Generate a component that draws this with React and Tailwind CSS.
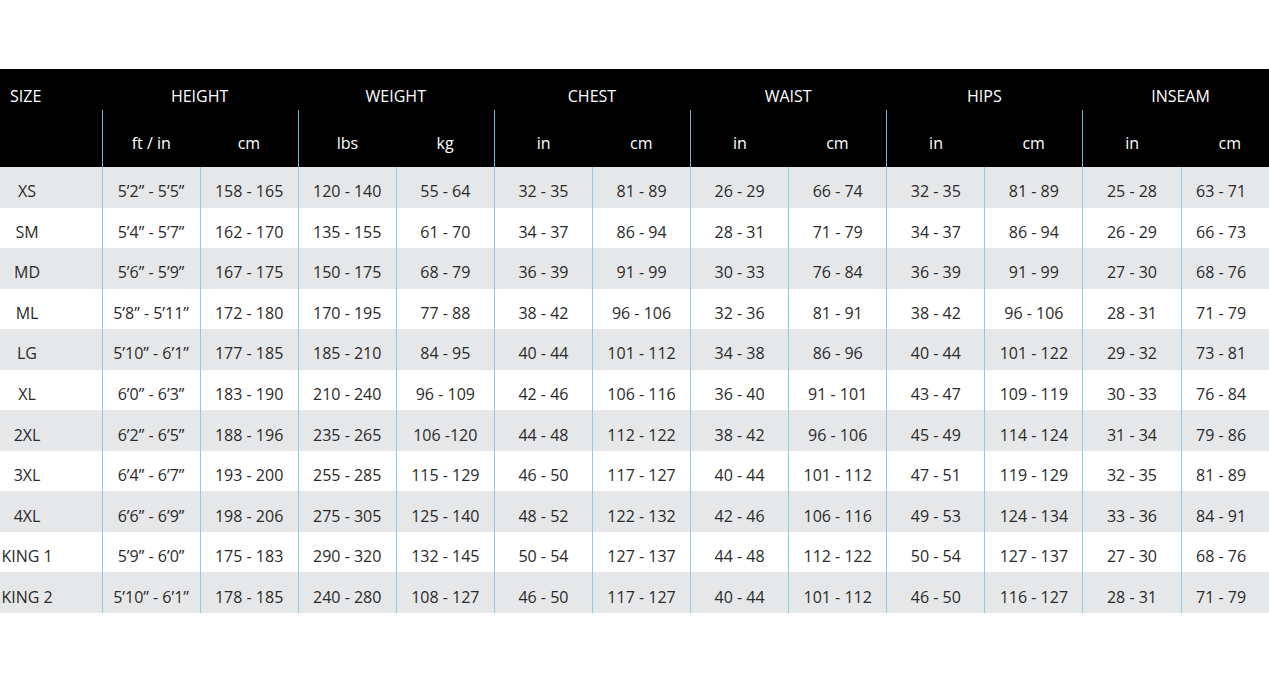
const groups = ["HEIGHT", "WEIGHT", "CHEST", "WAIST", "HIPS", "INSEAM"];
const subs = [
  ["ft / in", "cm"],
  ["lbs", "kg"],
  ["in", "cm"],
  ["in", "cm"],
  ["in", "cm"],
  ["in", "cm"],
];

const rows = [
  ["XS", "5\u20192\u201d - 5\u20195\u201d", "158 - 165", "120 - 140", "55 - 64", "32 - 35", "81 - 89", "26 - 29", "66 - 74", "32 - 35", "81 - 89", "25 - 28", "63 - 71"],
  ["SM", "5\u20194\u201d - 5\u20197\u201d", "162 - 170", "135 - 155", "61 - 70", "34 - 37", "86 - 94", "28 - 31", "71 - 79", "34 - 37", "86 - 94", "26 - 29", "66 - 73"],
  ["MD", "5\u20196\u201d - 5\u20199\u201d", "167 - 175", "150 - 175", "68 - 79", "36 - 39", "91 - 99", "30 - 33", "76 - 84", "36 - 39", "91 - 99", "27 - 30", "68 - 76"],
  ["ML", "5\u20198\u201d - 5\u201911\u201d", "172 - 180", "170 - 195", "77 - 88", "38 - 42", "96 - 106", "32 - 36", "81 - 91", "38 - 42", "96 - 106", "28 - 31", "71 - 79"],
  ["LG", "5\u201910\u201d - 6\u20191\u201d", "177 - 185", "185 - 210", "84 - 95", "40 - 44", "101 - 112", "34 - 38", "86 - 96", "40 - 44", "101 - 122", "29 - 32", "73 - 81"],
  ["XL", "6\u20190\u201d - 6\u20193\u201d", "183 - 190", "210 - 240", "96 - 109", "42 - 46", "106 - 116", "36 - 40", "91 - 101", "43 - 47", "109 - 119", "30 - 33", "76 - 84"],
  ["2XL", "6\u20192\u201d - 6\u20195\u201d", "188 - 196", "235 - 265", "106 -120", "44 - 48", "112 - 122", "38 - 42", "96 - 106", "45 - 49", "114 - 124", "31 - 34", "79 - 86"],
  ["3XL", "6\u20194\u201d - 6\u20197\u201d", "193 - 200", "255 - 285", "115 - 129", "46 - 50", "117 - 127", "40 - 44", "101 - 112", "47 - 51", "119 - 129", "32 - 35", "81 - 89"],
  ["4XL", "6\u20196\u201d - 6\u20199\u201d", "198 - 206", "275 - 305", "125 - 140", "48 - 52", "122 - 132", "42 - 46", "106 - 116", "49 - 53", "124 - 134", "33 - 36", "84 - 91"],
  ["KING 1", "5\u20199\u201d - 6\u20190\u201d", "175 - 183", "290 - 320", "132 - 145", "50 - 54", "127 - 137", "44 - 48", "112 - 122", "50 - 54", "127 - 137", "27 - 30", "68 - 76"],
  ["KING 2", "5\u201910\u201d - 6\u20191\u201d", "178 - 185", "240 - 280", "108 - 127", "46 - 50", "117 - 127", "40 - 44", "101 - 112", "46 - 50", "116 - 127", "28 - 31", "71 - 79"],
];

const SizeChart = () => {
  return (
    <div className="w-[1269px] overflow-hidden">
      <div className="w-[1279px]">
        {/* header */}
        <div className="bg-black text-white flex h-[98px]">
          <div className="w-[101.5px] shrink-0 pl-[10px] pt-[19px]">SIZE</div>
          {groups.map((g, i) => (
            <div key={g} className="w-[196.2px] shrink-0 flex flex-col">
              <div className="h-[41px] pt-[19px] text-center">{g}</div>
              <div className="flex-1 flex border-l border-[#6fb8d6]">
                {subs[i].map((s) => (
                  <div key={s} className="flex-1 text-center pt-[25px]">
                    {s}
                  </div>
                ))}
              </div>
            </div>
          ))}
        </div>

        {/* body */}
        {rows.map((r, ri) => (
          <div
            key={r[0]}
            className={`flex h-[40.55px] ${ri % 2 === 0 ? "bg-[#e6e7e9]" : "bg-white"}`}
          >
            <div className="w-[101.5px] shrink-0 flex items-center pt-[8px]">
              <span className="w-[54px] text-center">{r[0]}</span>
            </div>
            {r.slice(1).map((v, ci) => (
              <div
                key={ci}
                className={`w-[98.1px] shrink-0 flex items-center justify-center pt-[8px] border-l border-[#8fcbe2] ${
                  ci === 11 ? "pr-[18px]" : ""
                }`}
              >
                {v}
              </div>
            ))}
          </div>
        ))}
      </div>
    </div>
  );
}

export default function App() {
  return (
    <div
      className="w-[1269px] h-[700px] bg-white pt-[69px] text-[16px] text-[#2a2a2a] leading-none"
      style={{ fontFamily: '"Open Sans", "Noto Sans", sans-serif' }}
    >
      <SizeChart />
    </div>
  );
}
